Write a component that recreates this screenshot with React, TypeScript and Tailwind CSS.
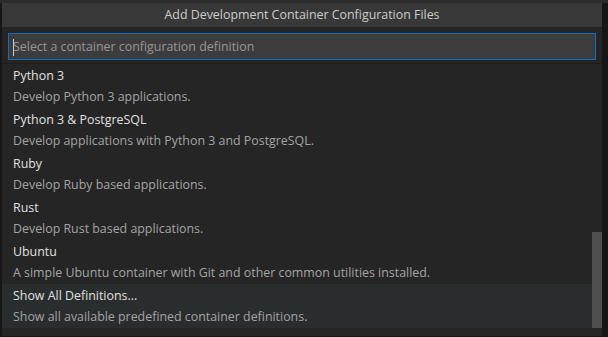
import React from 'react';

type Item = { label: string; detail: string };

const items: Item[] = [
  { label: 'Python 3', detail: 'Develop Python 3 applications.' },
  { label: 'Python 3 & PostgreSQL', detail: 'Develop applications with Python 3 and PostgreSQL.' },
  { label: 'Ruby', detail: 'Develop Ruby based applications.' },
  { label: 'Rust', detail: 'Develop Rust based applications.' },
  { label: 'Ubuntu', detail: 'A simple Ubuntu container with Git and other common utilities installed.' },
  { label: 'Show All Definitions...', detail: 'Show all available predefined container definitions.' },
];

export default function App() {
  return (
    <div
      className="w-[608px] h-[337px] bg-[#161616] overflow-hidden"
      style={{ fontFamily: '"Open Sans", "Noto Sans", sans-serif' }}
    >
      <div className="h-[3px] bg-[#2b2b2b]" />
      <div className="ml-[2px] w-[600px] h-[333px] bg-[#252526] flex flex-col">
        {/* title */}
        <div className="h-[24px] bg-[#383838] flex items-center justify-center text-[12.4px] text-[#cccccc]">
          Add Development Container Configuration Files
        </div>
        {/* input */}
        <div className="px-[6px] pt-[6px] pb-[3px]">
          <div className="h-[27px] border border-[#0e70c0] bg-[#3c3c3c] flex items-center pl-[4px] pt-px text-[12.4px] text-[#979797]">
            <span className="w-px h-[17px] bg-[#cccccc] mr-[-1px]" />
            Select a container configuration definition
          </div>
        </div>
        <div className="h-px bg-[#1d1d1d]" />
        {/* list */}
        <div className="flex relative">
          <div className="flex-1">
            {items.map((it, i) => (
              <div
                key={it.label}
                className={`h-[44px] pl-[11px] flex flex-col justify-center ${
                  i === items.length - 1 ? 'bg-[#2a2d2e]' : ''
                }`}
              >
                <div className="text-[12.4px] leading-[21px] text-[#e0e0e0]">{it.label}</div>
                <div className="text-[12.4px] leading-[21px] text-[#a4a4a4]">{it.detail}</div>
              </div>
            ))}
          </div>
          <div className="absolute right-0 top-[168px] w-[10px] h-[96px] bg-[#4f4f4f]" />
        </div>
      </div>
    </div>
  );
}
